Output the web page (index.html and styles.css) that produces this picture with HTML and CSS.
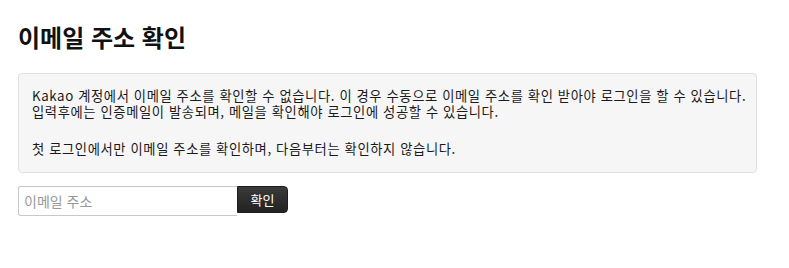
FILE: index.html
```
<!DOCTYPE html>
<html lang="ko">
<head>
<meta charset="utf-8">
<title>이메일 주소 확인</title>
<link rel="stylesheet" href="styles.css">
</head>
<body>
<div class="page">
  <h1 class="title">이메일 주소 확인</h1>
  <div class="well">
    <p class="para first">Kakao 계정에서 이메일 주소를 확인할 수 없습니다. 이 경우 수동으로 이메일 주소를 확인 받아야 로그인을 할 수 있습니다.<br>입력후에는 인증메일이 발송되며, 메일을 확인해야 로그인에 성공할 수 있습니다.</p>
    <p class="para">첫 로그인에서만 이메일 주소를 확인하며, 다음부터는 확인하지 않습니다.</p>
  </div>
  <form class="form" onsubmit="return false">
    <input class="email" type="email" placeholder="이메일 주소">
    <button class="btn" type="submit">확인</button>
  </form>
</div>
</body>
</html>
```
FILE: styles.css
```
* { box-sizing: border-box; }
html, body { margin: 0; padding: 0; background: #fff; }
body {
  font-family: "Noto Sans CJK KR", "Noto Sans", sans-serif;
  color: #1a1a1a;
}
.page { padding: 0 32px 0 18px; }
.title {
  margin: 0;
  padding-top: 22px;
  height: 73px;
  font-size: 24px;
  line-height: 30px;
  font-weight: 700;
  color: #111;
  letter-spacing: 0;
}
.well {
  width: 739px;
  background: #f6f6f6;
  border: 1px solid #e0e0e0;
  border-radius: 4px;
  padding: 14px 13px 15px 13px;
}
.para {
  margin: 0;
  font-size: 13.3px;
  line-height: 16px;
  letter-spacing: 0.6px;
  white-space: nowrap;
}
.para.first { margin-bottom: 21px; }
.form {
  display: flex;
  align-items: flex-start;
  margin-top: 13px;
}
.email {
  width: 219px;
  height: 30px;
  margin: 0;
  border: 1px solid #c8c8c8;
  border-right: none;
  border-radius: 3px 0 0 3px;
  padding: 0 5px;
  font-family: "Noto Sans CJK KR", "Noto Sans", sans-serif;
  font-size: 14px;
  color: #333;
  background: #fff;
  outline: none;
}
.email::placeholder { color: #999; }
.btn {
  width: 51px;
  height: 27px;
  margin: 0;
  border: 1px solid #1e1e1e;
  border-radius: 0 4px 4px 0;
  background: linear-gradient(#3a3a3a, #222);
  color: #fff;
  font-family: "Noto Sans CJK KR", "Noto Sans", sans-serif;
  font-size: 13px;
  padding: 0;
  line-height: 25px;
}
```
